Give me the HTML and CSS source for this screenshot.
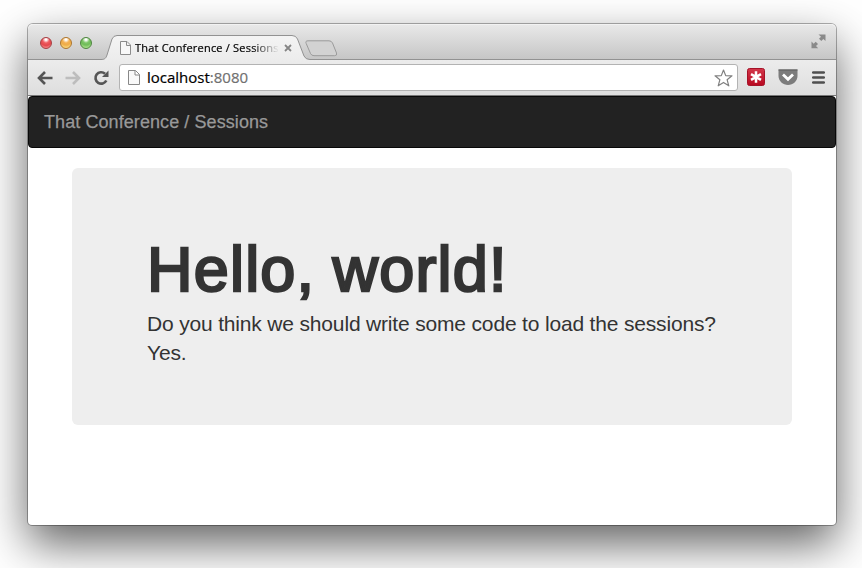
FILE: index.html
```html
<!DOCTYPE html>
<html lang="en">
<head>
<meta charset="utf-8">
<title>That Conference / Sessions</title>
<link rel="stylesheet" href="styles.css">
</head>
<body>
<div class="window">
  <header class="tabstrip">
    <div class="lights"><span class="light red"></span><span class="light amber"></span><span class="light green"></span></div>
    <div class="tab">
      <svg class="tab-shape" width="212" height="25" viewBox="0 0 212 25"><defs><linearGradient id="tabfill" x1="0" y1="0" x2="0" y2="1"><stop offset="0" stop-color="#f4f4f4"/><stop offset="1" stop-color="#ececec"/></linearGradient></defs><path d="M0 25V24.500C4 24.500 5 23 6 20L11 4Q12.500 .5 16 .5H191Q195 .5 196.500 4L203 21Q204.500 24.500 209 24.500H212V25Z" fill="url(#tabfill)"/><path d="M0 24.500C4 24.500 5 23 6 20L11 4Q12.500 .5 16 .5H191Q195 .5 196.500 4L203 21Q204.500 24.500 209 24.500H212" fill="none" stroke="#929292"/></svg>
      <svg class="tab-page" width="11" height="14" viewBox="0 0 11 14"><path d="M.5.5H7L10.500 4V13.500H.5ZM6.500 .5V4.500H10.500" fill="#f8f8f8" stroke="#8c8c8c"/></svg>
      <span class="tab-title">That Conference / Sessions</span>
      <svg class="tab-close" width="8" height="8" viewBox="0 0 8 8"><path d="M1 1L7 7M7 1L1 7" stroke="#858585" stroke-width="1.800"/></svg>
    </div>
    <svg class="newtab" width="33" height="17" viewBox="0 0 33 17"><path d="M3 .8H24Q26.500 .8 27.500 3L31.500 13Q32.500 15.700 29.500 15.700H9Q6.500 15.700 5.500 13.500L1.200 3.500Q0 .8 3 .8Z" fill="#d2d2d2" stroke="#9b9b9b"/></svg>
    <svg class="expand" width="15" height="15" viewBox="0 0 15 15"><path d="M7.500 .5H14.500V7L12.300 5L10.300 7L8 4.700L10 2.700ZM.5 7.500L2.700 9.700L4.700 7.700L7 10L5 12L7.200 14.200H.5Z" fill="#8a8a8a"/></svg>
  </header>
  <div class="toolbar">
    <svg class="back" width="16" height="14" viewBox="0 0 16 14"><path d="M8 1L2 7L8 13M2 7H15.500" fill="none" stroke="#555" stroke-width="2.600"/></svg>
    <svg class="forward" width="16" height="14" viewBox="0 0 16 14"><path d="M8 1L14 7L8 13M14 7H.5" fill="none" stroke="#bdbdbd" stroke-width="2.600"/></svg>
    <svg class="reload" width="16" height="16" viewBox="0 0 16 16"><path d="M12 3.700A5.700 5.700 0 1 0 13.300 10.500" fill="none" stroke="#555" stroke-width="2.700"/><path d="M15.500 .5V7H9Z" fill="#555"/></svg>
    <div class="address">
      <svg width="12" height="15" viewBox="0 0 12 15"><path d="M.5.5H7.500L11.500 4.500V14.500H.5ZM7 .5V5H11.500" fill="#f9f9f9" stroke="#888"/></svg>
      <span class="url">localhost<span class="port">:8080</span></span>
      <svg class="star" width="19" height="18" viewBox="0 0 19 18"><path d="M9.500 1L11.700 6.600L18 6.800L13.100 10.700L14.800 16.800L9.500 13.400L4.200 16.800L5.900 10.700L1 6.800L7.300 6.600Z" fill="#fff" stroke="#808080" stroke-width="1.200" stroke-linejoin="round"/></svg>
    </div>
    <svg class="asterisk" width="18" height="18" viewBox="0 0 18 18"><defs><linearGradient id="redfill" x1="0" y1="0" x2="0" y2="1"><stop offset="0" stop-color="#d3374a"/><stop offset="1" stop-color="#b80820"/></linearGradient></defs><rect x=".5" y=".5" width="17" height="17" rx="2" fill="url(#redfill)" stroke="#a51328"/><path d="M9 3.200V14.800M4 6.100L14 11.900M14 6.100L4 11.900" stroke="#fff" stroke-width="2.500"/></svg>
    <svg class="pocket" width="20" height="17" viewBox="0 0 20 17"><path d="M.5 .5H19.500V7C19.500 12 15 16 10 16S.5 12 .5 7Z" fill="#7c7c7c"/><path d="M.5 1H19.500" stroke="#5c5c5c"/><path d="M5 5.500L10 10.300L15 5.500" fill="none" stroke="#fff" stroke-width="2.800"/></svg>
    <svg class="menu" width="13" height="13" viewBox="0 0 13 13"><path d="M1.200 1.500H11.800M1.200 6.500H11.800M1.200 11.500H11.800" stroke="#4f4f4f" stroke-width="2.500" stroke-linecap="round"/></svg>
  </div>
  <main class="page">
    <nav class="navbar"><span class="brand">That Conference / Sessions</span></nav>
    <section class="jumbotron">
      <h1>Hello, world!</h1>
      <p class="lead">Do you think we should write some code to load the sessions?</p>
      <p class="answer">Yes.</p>
    </section>
  </main>
</div>
</body>
</html>
```
FILE: styles.css
```css
* { box-sizing: border-box; }
html, body { height: 100%; }
body { margin: 0; padding: 24px 26px 43px 28px; background: #fff; overflow: hidden; font-family: "Liberation Sans", sans-serif; }
svg { display: block; flex: none; }
.window { height: 501px; display: flex; flex-direction: column; background: #fff; border-radius: 5px 5px 4px 4px; box-shadow: 0 0 0 1px rgba(0,0,0,.3), 0 19px 46px rgba(0,0,0,.62); }
.tabstrip { height: 36px; display: flex; align-items: flex-end; border-radius: 5px 5px 0 0; background: linear-gradient(#e9e9e9, #c5c5c5); box-shadow: inset 0 1px #f2f2f2, inset 0 -1px #929292; }
.lights { display: flex; gap: 8px; padding: 0 0 11px 12px; width: 73px; }
.light { width: 12px; height: 12px; flex: none; border-radius: 50%; border: 1px solid; }
.red { border-color: #a63e42; background: radial-gradient(circle at 50% 15%, #fff 0 8%, #ee5c60 35%, #e4474c 60%, #ffaba8 100%); }
.amber { border-color: #ad752e; background: radial-gradient(circle at 50% 15%, #fff 0 8%, #f3b052 35%, #efac48 55%, #fff09a 100%); }
.green { border-color: #4e853f; background: radial-gradient(circle at 50% 15%, #fff 0 8%, #7cc567 35%, #70bc59 55%, #c9f7a8 100%); }
.tab { display: grid; width: 212px; height: 25px; grid-template-columns: 19px 15px 147px 31px; align-items: center; }
.tab-shape { grid-area: 1 / 1 / 2 / 5; }
.tab-page { grid-area: 1 / 2; }
.tab-title { grid-area: 1 / 3; overflow: hidden; white-space: nowrap; color: #000; font: 11px/16px "Open Sans", sans-serif; letter-spacing: .2px; -webkit-text-stroke: .2px #000; -webkit-mask-image: linear-gradient(90deg, #000 118px, transparent 144px); mask-image: linear-gradient(90deg, #000 118px, transparent 144px); }
.tab-close { grid-area: 1 / 4; margin-left: 2px; }
.newtab { margin: 0 0 3px -8px; }
.expand { margin: 0 10px 11px auto; }
.toolbar { height: 36px; display: flex; align-items: center; padding-left: 9px; background: linear-gradient(#ececec, #dedede); border-bottom: 1px solid #777; }
.forward { margin-left: 12px; }
.reload { margin-left: 12px; }
.address { display: flex; align-items: center; margin-left: 10px; width: 619px; height: 27px; padding: 0 4px 0 8px; border: 1px solid #b3b3b3; border-radius: 3px; background: #fff; }
.url { margin: -2px 0 0 7px; color: #000; font: 15px/20px "Open Sans", sans-serif; white-space: nowrap; -webkit-text-stroke: .2px; }
.port { color: #707070; }
.star { margin-left: auto; }
.asterisk { margin: -2px 0 0 9px; }
.pocket { margin-left: 13px; }
.menu { margin-left: 14px; }
.page { flex: 1; }
.navbar { height: 52px; padding: 15px; border: 1px solid #080808; border-radius: 4px; background: #222; }
.brand { display: block; color: #999; font-size: 18px; line-height: 20px; letter-spacing: .08px; -webkit-text-stroke: .25px #999; }
.jumbotron { height: 257px; margin: 20px 44px 0; padding: 70px 75px; border-radius: 6px; background: #eee; color: #333; }
h1 { margin: 0; font-size: 63px; line-height: 62px; padding-bottom: 1px; font-weight: 400; letter-spacing: 1.2px; word-spacing: -1.5px; white-space: nowrap; -webkit-text-stroke: 2.4px #333; }
p { margin: 0; font-size: 21px; line-height: 29px; letter-spacing: -.17px; white-space: nowrap; }
.lead { padding-top: 8px; }
```
